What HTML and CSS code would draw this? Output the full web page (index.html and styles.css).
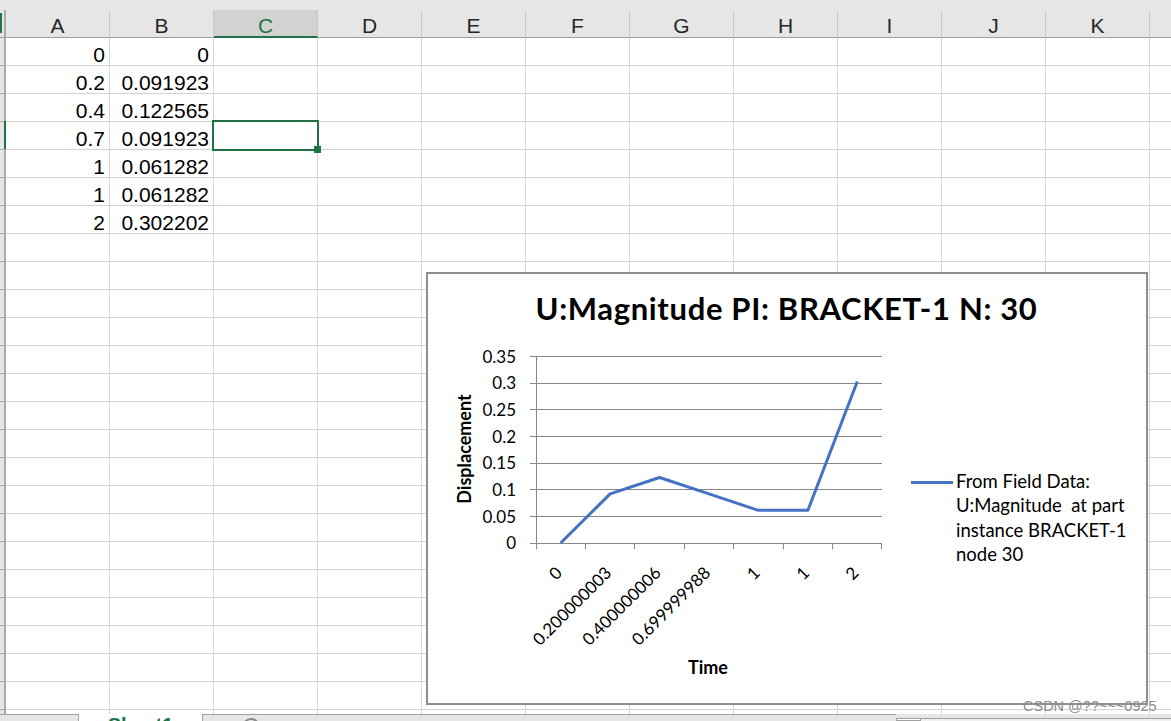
FILE: index.html
```html
<!DOCTYPE html>
<html>
<head>
<meta charset="utf-8">
<title>Sheet</title>
<link rel="stylesheet" href="styles.css">
</head>
<body>
<div class="app">
  <div class="topstrip"></div>
  <div class="colheads">
    <div class="corner"><span class="corner-mark"></span></div>
    <div class="ch">A</div>
    <div class="ch">B</div>
    <div class="ch sel">C</div>
    <div class="ch">D</div>
    <div class="ch">E</div>
    <div class="ch">F</div>
    <div class="ch">G</div>
    <div class="ch">H</div>
    <div class="ch">I</div>
    <div class="ch">J</div>
    <div class="ch">K</div>
    <div class="ch last"></div>
  </div>
  <div class="sheet">
    <div class="rowheads"><span class="rowsel"></span></div>
    <div class="grid">
      <div class="cells">
        <div class="cell">0</div><div class="cell">0</div>
        <div class="cell">0.2</div><div class="cell">0.091923</div>
        <div class="cell">0.4</div><div class="cell">0.122565</div>
        <div class="cell">0.7</div><div class="cell">0.091923</div>
        <div class="cell">1</div><div class="cell">0.061282</div>
        <div class="cell">1</div><div class="cell">0.061282</div>
        <div class="cell">2</div><div class="cell">0.302202</div>
      </div>
      <div class="selection"><span class="handle"></span></div>
      <div class="chart">
        <svg class="chart-svg" width="718" height="429" viewBox="428 274 718 429">
          <text class="ttl" x="786.5" y="320" text-anchor="middle">U:Magnitude PI: BRACKET-1 N: 30</text>
          <g class="gl">
            <line x1="530" y1="356.5" x2="882" y2="356.5"/>
            <line x1="530" y1="383.5" x2="882" y2="383.5"/>
            <line x1="530" y1="409.5" x2="882" y2="409.5"/>
            <line x1="530" y1="436.5" x2="882" y2="436.5"/>
            <line x1="530" y1="463.5" x2="882" y2="463.5"/>
            <line x1="530" y1="489.5" x2="882" y2="489.5"/>
            <line x1="530" y1="516.5" x2="882" y2="516.5"/>
            <line x1="530" y1="543.5" x2="882" y2="543.5"/>
            <line x1="536.5" y1="356" x2="536.5" y2="543"/>
            <line x1="536.5" y1="543" x2="536.5" y2="549"/>
            <line x1="585.5" y1="543" x2="585.5" y2="549"/>
            <line x1="634.5" y1="543" x2="634.5" y2="549"/>
            <line x1="684.5" y1="543" x2="684.5" y2="549"/>
            <line x1="733.5" y1="543" x2="733.5" y2="549"/>
            <line x1="783.5" y1="543" x2="783.5" y2="549"/>
            <line x1="832.5" y1="543" x2="832.5" y2="549"/>
            <line x1="881.5" y1="543" x2="881.5" y2="549"/>
          </g>
          <g class="ax" text-anchor="end">
            <text x="516" y="362.5">0.35</text>
            <text x="516" y="389">0.3</text>
            <text x="516" y="415.5">0.25</text>
            <text x="516" y="442.5">0.2</text>
            <text x="516" y="469">0.15</text>
            <text x="516" y="495.5">0.1</text>
            <text x="516" y="522.5">0.05</text>
            <text x="516" y="549">0</text>
          </g>
          <g class="ax" text-anchor="end">
            <text transform="translate(563.2 574) rotate(-45)">0</text>
            <text transform="translate(612.6 574) rotate(-45)">0.200000003</text>
            <text transform="translate(662.1 574) rotate(-45)">0.400000006</text>
            <text transform="translate(711.5 574) rotate(-45)">0.699999988</text>
            <text transform="translate(760.9 574) rotate(-45)">1</text>
            <text transform="translate(810.4 574) rotate(-45)">1</text>
            <text transform="translate(859.8 574) rotate(-45)">2</text>
          </g>
          <polyline class="series" points="560.7,543 610.1,493.9 659.6,477.5 709,493.9 758.4,510.3 807.9,510.3 857.3,381.5"/>
          <text class="axt" transform="translate(470.5 449) rotate(-90)" text-anchor="middle">Displacement</text>
          <text class="axt" x="708" y="674" text-anchor="middle">Time</text>
          <line class="series" x1="911" y1="482.5" x2="953" y2="482.5"/>
          <text class="leg">
            <tspan x="956" y="487.5">From Field Data:</tspan>
            <tspan x="956" y="512" class="pre">U:Magnitude  at part</tspan>
            <tspan x="956" y="536.5">instance BRACKET-1</tspan>
            <tspan x="956" y="561">node 30</tspan>
          </text>
        </svg>
      </div>
    </div>
  </div>
  <div class="tabbar">
    <div class="tab-nav"></div>
    <div class="tab-active">Sheet1</div>
    <div class="tab-rest"><span class="add-sheet"></span></div>
    <div class="tab-split"></div>
    <div class="hscroll"></div>
  </div>
  <div class="watermark">CSDN @??~~~0925</div>
</div>
</body>
</html>
```

FILE: styles.css
```css
* { box-sizing: border-box; margin: 0; padding: 0; }
html, body { width: 1171px; height: 721px; overflow: hidden; background: #fff; }
body { font-family: "Liberation Sans", Arial, sans-serif; color: #000; }

.app { position: relative; width: 1171px; height: 721px; display: flex; flex-direction: column; }

.topstrip { flex: none; height: 10px; background: #e6e6e6; }

.colheads { flex: none; height: 28px; display: flex; background: #e6e6e6; }
.corner { position: relative; flex: none; width: 6px; border-right: 2px solid #ababab; border-bottom: 1px solid #9e9e9e; }
.corner-mark { position: absolute; left: 0; top: 3px; width: 2px; height: 20px; background: #217346; }
.ch {
  flex: none; width: 104px;
  border-right: 1px solid #c8c8c8; border-bottom: 1px solid #9e9e9e;
  text-align: center; font-size: 21px; line-height: 32px; color: #262626;
}
.ch.sel { background: #d2d2d2; color: #217346; border-bottom: 2px solid #217346; }
.ch.last { flex: 1; border-right: 0; }

.sheet { flex: none; height: 676px; display: flex; }
.rowheads {
  position: relative; flex: none; width: 6px;
  background: repeating-linear-gradient(to bottom, transparent 0 27px, #ababab 27px 28px), #e6e6e6;
  border-right: 2px solid #ababab;
}
.rowsel { position: absolute; right: -2px; top: 83px; width: 2px; height: 28px; background: #217346; }

.grid {
  position: relative; flex: 1;
  background-image:
    repeating-linear-gradient(to right, transparent 0 103px, #d4d4d4 103px 104px),
    repeating-linear-gradient(to bottom, transparent 0 27px, #d4d4d4 27px 28px);
}
.cells { display: grid; grid-template-columns: 104px 104px; grid-auto-rows: 28px; }
.cell { text-align: right; padding: 3px 5px 0 0; font-size: 21px; line-height: 27px; }

.selection { position: absolute; left: 206px; top: 82px; width: 107px; height: 31px; border: 2px solid #217346; }
.handle { position: absolute; right: -4px; bottom: -4px; width: 7px; height: 7px; background: #217346; }

.chart { position: absolute; left: 420px; top: 234px; width: 722px; height: 433px; border: 2px solid #8f8f8f; background: #fff; }
.chart-svg { display: block; }
.ttl { font: 700 31px Lato, "Open Sans", sans-serif; letter-spacing: 0.65px; fill: #000; }
.gl line { stroke: #878787; stroke-width: 1; }
.ax { font: 400 17px Lato, sans-serif; fill: #000; }
.axt { font: 700 18px Lato, sans-serif; fill: #000; }
.leg { font: 400 18.5px Lato, sans-serif; fill: #000; }
.pre { white-space: pre; }
.series { fill: none; stroke: #4472c4; stroke-width: 3; stroke-linejoin: round; }

.tabbar { flex: none; height: 7px; display: flex; background: #e6e6e6; overflow: hidden; }
.tab-nav { flex: none; width: 79px; border-top: 1px solid #a0a0a0; border-right: 1px solid #a0a0a0; }
.tab-active { flex: none; width: 123px; background: #fff; color: #217346; font-weight: 700; font-size: 20px; line-height: 20px; padding-top: 1px; text-align: center; }
.tab-rest { flex: none; width: 694px; border-top: 1px solid #a0a0a0; border-left: 1px solid #a0a0a0; padding: 3px 0 0 39px; }
.add-sheet { display: block; width: 18px; height: 18px; border: 2px solid #8a8a8a; border-radius: 50%; }
.tab-split { flex: none; width: 25px; margin-top: 4px; border: 1px solid #a0a0a0; background: #fff; }
.hscroll { flex: 1; margin-top: 4px; border-top: 1px solid #a0a0a0; background: #f0f0f0; }

.watermark { position: absolute; left: 1023px; top: 699px; font-size: 14.5px; line-height: 15px; color: #8e8e8e; white-space: nowrap; }
```
